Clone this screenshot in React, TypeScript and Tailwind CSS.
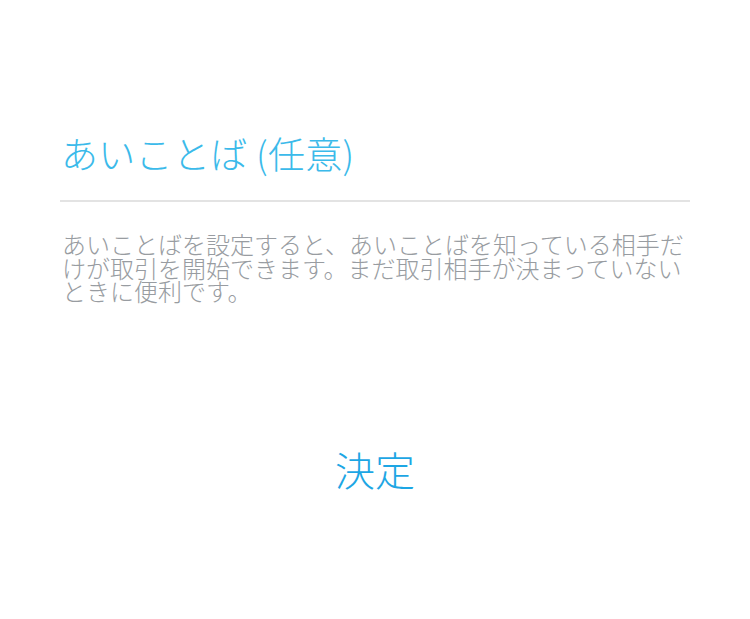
export default function App() {
  return (
    <div
      className="w-[750px] h-[619px] bg-white flex flex-col px-[60px]"
      style={{ fontFamily: '"Noto Sans CJK JP", "Noto Sans", sans-serif' }}
    >
      <div className="pt-[129px] pb-[23px] pl-[1px] text-[37px] leading-[48px] font-light text-[#3bbaea] tracking-[0.3px]">
        あいことば (任意)
      </div>
      <div className="h-[2px] bg-[#e3e3e3]" />
      <p className="mt-[30px] pl-[2px] mr-[-12px] text-[24px] leading-[23.5px] font-light text-[#989ca1]">
        あいことばを設定すると、あいことばを知っている相手だけが取引を開始できます。まだ取引相手が決まっていないときに便利です。
      </p>
      <div className="mt-[142px] flex justify-center">
        <button className="text-[40px] leading-[48px] font-light text-[#1da6e4]">決定</button>
      </div>
    </div>
  );
}
